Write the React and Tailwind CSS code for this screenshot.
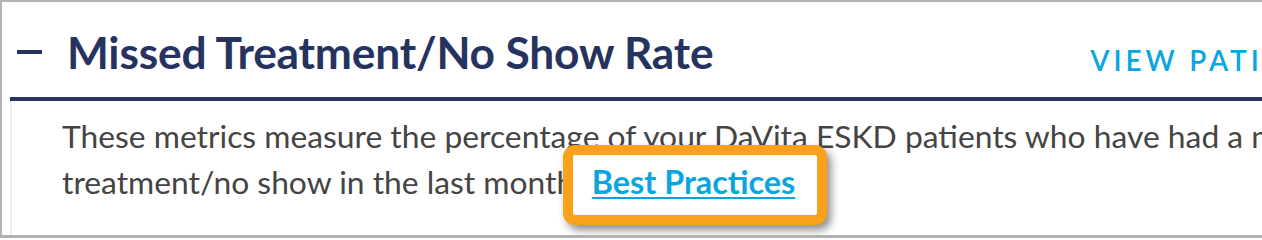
export default function App() {
  return (
    <div className="w-[1262px] h-[238px] overflow-hidden bg-white border-l-2 border-t-2 border-b-[3px] border-[#b2b2b2] font-['Lato',sans-serif]">
      <div className="ml-2 w-[1600px]">
        <div className="flex items-center h-[95px] pl-[7px]">
          <div className="w-[25px] h-[4px] bg-[#26335f] mt-[4px]" />
          <h2 className="ml-[25px] mt-[6px] text-[44.3px] font-bold text-[#26335f] leading-none tracking-[-0.2px]">
            Missed Treatment/No Show Rate
          </h2>
          <a className="ml-[377px] mt-[20px] text-[28px] font-semibold tracking-[0.14em] text-[#0aa6e2]">
            VIEW PATIENTS
          </a>
        </div>
        <div className="h-[4px] bg-[#273462]" />
        <div className="border-l-2 border-[#efefef] pl-[50px] pt-[12px] pb-[40px]">
          <p className="text-[31.8px] leading-[46px] text-[#444444] whitespace-nowrap">
            These metrics measure the percentage of your DaVita ESKD patients who have had a missed
            <br />
            treatment/no show in the last month.{" "}
            <span className="relative inline-block ml-[2px]">
              <span className="absolute left-[-29px] right-[-32px] top-[-14px] bottom-[-20px] rounded-[12px] border-[10px] border-[#f9a11b] bg-white shadow-[4px_5px_8px_rgba(0,0,0,0.45)]" />
              <a className="relative text-[32.3px] font-bold text-[#0aa5e1] underline decoration-2 underline-offset-[3px]">
                Best Practices
              </a>
            </span>
          </p>
        </div>
      </div>
    </div>
  );
}
